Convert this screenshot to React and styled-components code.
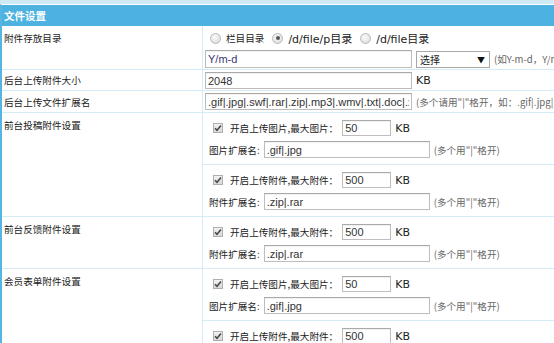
import React from "react";
import styled, { createGlobalStyle } from "styled-components";

const Global = createGlobalStyle`
  body {
    margin: 0;
    background: #fff;
    font-family: "DejaVu Sans", "Noto Sans CJK SC", sans-serif;
    color: #222;
    overflow: hidden;
  }
`;

const Page = styled.div`
  border-top: 4px solid #cfe9f6;
  width: 554px;
  height: 339px;
  overflow: hidden;
`;

const Table = styled.div`
  border-left: 2px solid #55b6e2;
  border-top: 1px solid #fff;
  height: 100%;
`;

const Caption = styled.div`
  height: 21px;
  background: #4db2df;
  color: #fff;
  font-weight: bold;
  font-size: 10.5px;
  line-height: 21px;
  padding-left: 2px;
  font-family: "Noto Sans CJK SC", sans-serif;
`;

const Row = styled.div`
  display: grid;
  grid-template-columns: 201px 1fr;
  border-bottom: 1px solid #d4ecf8;
`;

const Label = styled.div`
  border-right: 1px solid #d4ecf8;
  padding: ${(p) => (p.$center ? "0 2px" : "5px 2px 0")};
  display: flex;
  align-items: ${(p) => (p.$center ? "center" : "flex-start")};
  font-size: 9.6px;
  line-height: 14px;
  font-family: "Noto Sans CJK SC", sans-serif;
`;

const Cell = styled.div`
  padding: ${(p) => p.$pad || "2px 2px 1px"};
  display: flex;
  flex-direction: column;
  gap: ${(p) => p.$gap || "0"};
`;

const SubCell = styled.div`
  display: flex;
  flex-direction: column;
  gap: 5px;
  padding: 7px 2px 6px 2px;
  & + & {
    border-top: 1px solid #d4ecf8;
  }
`;

const Line = styled.div`
  display: flex;
  align-items: center;
  gap: ${(p) => p.$gap ?? 4}px;
  height: ${(p) => p.$h || 17}px;
  padding-left: ${(p) => p.$indent || 0}px;
  white-space: nowrap;
`;

const Text = styled.span`
  font-size: ${(p) => (p.$latin ? 11 : 9.6)}px;
  color: ${(p) => (p.$muted ? "#666" : "#222")};
  font-family: ${(p) =>
    p.$latin
      ? `"DejaVu Sans", "Noto Sans CJK SC", sans-serif`
      : `"Noto Sans CJK SC", "DejaVu Sans", sans-serif`};
`;

const Input = styled.input`
  box-sizing: border-box;
  width: ${(p) => p.$w}px;
  height: ${(p) => p.$h || 17}px;
  border: 1px solid #bdbdbd;
  border-top-color: #a9a9a9;
  box-shadow: inset 0 1px 1px rgba(0, 0, 0, 0.06);
  padding: 0 2px;
  margin: 0;
  font-family: "Liberation Sans", sans-serif;
  font-size: 11px;
  color: ${(p) => p.$ink || "#333"};
  outline: none;
`;

const Select = styled.div`
  box-sizing: border-box;
  width: 74px;
  height: 17px;
  border: 1px solid #a9a9a9;
  display: flex;
  align-items: center;
  justify-content: space-between;
  padding: 0 4px 0 3px;
  font-size: 10px;
  font-family: "Noto Sans CJK SC", sans-serif;
  span:last-child {
    font-size: 8px;
    color: #111;
  }
`;

const Radio = styled.span`
  box-sizing: border-box;
  width: 11px;
  height: 11px;
  border-radius: 50%;
  border: 1px solid #b8b8b8;
  background: radial-gradient(circle at 40% 35%, #fafafa, #d8d8d8);
  display: inline-flex;
  align-items: center;
  justify-content: center;
  margin: 0 2px 0 5px;
  &::after {
    content: "";
    width: 4px;
    height: 4px;
    border-radius: 50%;
    background: ${(p) => (p.$on ? "#555" : "transparent")};
  }
`;

const Check = styled.span`
  width: 8px;
  height: 8px;
  border: 1px solid #b0b0b0;
  background: linear-gradient(#f2f2f2, #d8d8d8);
  display: inline-flex;
  align-items: center;
  justify-content: center;
  margin-right: 3px;
`;

const Checkbox = () => (
  <Check>
    <svg width="8" height="8" viewBox="0 0 8 8">
      <path d="M1 4.2 L3 6.3 L7 1.5" fill="none" stroke="#4a4a4a" strokeWidth="1.6" />
    </svg>
  </Check>
);

const Upload = ({ kind }) => {
  const img = kind === "img";
  return (
    <SubCell>
      <Line $h={16} $indent={8}>
        <Checkbox />
        <Text>{img ? "开启上传图片,最大图片：" : "开启上传附件,最大附件："}</Text>
        <Input $w={49} $h={16} defaultValue={img ? "50" : "500"} />
        <Text $latin>KB</Text>
      </Line>
      <Line $indent={4}>
        <Text>{img ? "图片扩展名:" : "附件扩展名:"}</Text>
        <Input $w={166} defaultValue={img ? ".gif|.jpg" : ".zip|.rar"} />
        <Text $muted>(多个用"|"格开)</Text>
      </Line>
    </SubCell>
  );
};

export default function App() {
  return (
    <Page>
      <Global />
      <Table>
        <Caption>文件设置</Caption>
        <Row>
          <Label>附件存放目录</Label>
          <Cell $gap="2px" $pad="2px 2px 1px">
            <Line $h={20} $gap={3}>
              <Radio />
              <Text>栏目目录</Text>
              <Radio $on />
              <Text $latin>/d/file/p目录</Text>
              <Radio />
              <Text $latin>/d/file目录</Text>
            </Line>
            <Line $h={18}>
              <Input $w={207} $h={18} $ink="#3e3575" defaultValue="Y/m-d" />
              <Select>
                <span>选择</span>
                <span>▼</span>
              </Select>
              <Text $muted>(如Y-m-d，Y/m-d等形式)</Text>
            </Line>
          </Cell>
        </Row>
        <Row>
          <Label $center>后台上传附件大小</Label>
          <Cell>
            <Line>
              <Input $w={207} defaultValue="2048" />
              <Text $latin>KB</Text>
            </Line>
          </Cell>
        </Row>
        <Row>
          <Label $center>后台上传文件扩展名</Label>
          <Cell $pad="2px">
            <Line>
              <Input
                $w={207}
                defaultValue=".gif|.jpg|.swf|.rar|.zip|.mp3|.wmv|.txt|.doc|.xls|.ppt"
              />
              <Text $muted>(多个请用"|"格开，如：.gif|.jpg|.swf)</Text>
            </Line>
          </Cell>
        </Row>
        <Row>
          <Label>前台投稿附件设置</Label>
          <Cell $pad="0">
            <Upload kind="img" />
            <Upload kind="file" />
          </Cell>
        </Row>
        <Row>
          <Label>前台反馈附件设置</Label>
          <Cell $pad="0">
            <Upload kind="file" />
          </Cell>
        </Row>
        <Row>
          <Label>会员表单附件设置</Label>
          <Cell $pad="0">
            <Upload kind="img" />
            <Upload kind="file" />
          </Cell>
        </Row>
      </Table>
    </Page>
  );
}
